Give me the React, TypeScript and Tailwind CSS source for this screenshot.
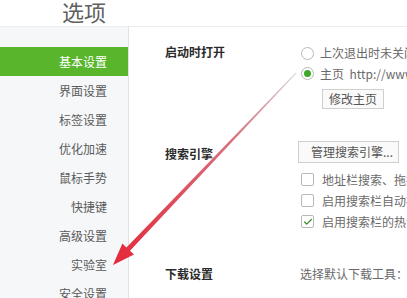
import { Check } from 'lucide-react'

const NAV = ['基本设置', '界面设置', '标签设置', '优化加速', '鼠标手势', '快捷键', '高级设置', '实验室', '安全设置']

function Radio({ on }: { on?: boolean }) {
  return (
    <span className="grid h-[13px] w-[13px] shrink-0 place-items-center rounded-full border border-[#b8b8b8] bg-white">
      {on ? <span className="h-[7px] w-[7px] rounded-full bg-[#3fa82a]" /> : null}
    </span>
  )
}

function Box({ on }: { on?: boolean }) {
  return (
    <span className="grid h-[13px] w-[13px] shrink-0 place-items-center rounded-[2px] border border-[#b8b8b8] bg-white">
      {on ? <Check className="h-[10px] w-[10px] text-[#3a8a2a]" strokeWidth={3} /> : null}
    </span>
  )
}

function Arrow() {
  return (
    <svg className="pointer-events-none absolute left-0 top-0" width="407" height="298" viewBox="0 0 407 298">
      <defs>
        <linearGradient id="ar" x1="296" y1="73" x2="113" y2="265" gradientUnits="userSpaceOnUse">
          <stop offset="0" stopColor="#d6ced1" />
          <stop offset="0.35" stopColor="#d9707c" />
          <stop offset="1" stopColor="#e4283a" />
        </linearGradient>
      </defs>
      <polygon
        points="296.4,73.3 295.6,72.7 126.4,247.4 122.4,243.6 113,265 134,254.6 130,250.8"
        fill="url(#ar)"
      />
    </svg>
  )
}

export default function App() {
  return (
    <div
      className="relative h-[298px] w-[407px] overflow-hidden bg-white text-[12px]"
      style={{ fontFamily: '"Noto Sans CJK SC", "Noto Sans", sans-serif' }}
    >
      <div className="h-[27px] border-b border-[#ececec] pl-[62px] text-[22px] leading-[22px] text-[#606060]">选项</div>
      <div className="flex">
        <aside className="h-[280px] w-[129px] shrink-0 border-r border-[#e2e2e2] bg-[#f6f7f9] pt-[20px]">
          {NAV.map((n, i) => (
            <div
              key={n}
              className={`flex h-[29px] items-center justify-end pr-[21px] ${
                i === 0 ? 'bg-[#58b52c] text-white' : 'text-[#5a5a5a]'
              }`}
            >
              {n}
            </div>
          ))}
        </aside>
        <main className="flex-1 whitespace-nowrap pl-[36px] pt-[16px] text-[#6a6a6a]">
          <div className="flex">
            <div className="w-[135px] font-bold text-[#2a2a2a]">启动时打开</div>
            <div className="flex flex-col">
              <div className="flex h-[20px] items-center gap-[6px] pl-[1px]">
                <Radio />
                <span>上次退出时未关闭的页面</span>
              </div>
              <div className="flex h-[21px] items-center gap-[6px] pl-[1px]">
                <Radio on />
                <span>主页&nbsp;&nbsp;http://www.hao123.com</span>
              </div>
              <button className="ml-[22px] mt-[5px] h-[20px] w-[62px] border border-[#cfcfcf] bg-[#fafafa] text-[12px] text-[#555]">
                修改主页
              </button>
            </div>
          </div>
          <div className="mt-[32px] flex">
            <div className="w-[133px] pt-[4px] font-bold text-[#2a2a2a]">搜索引擎</div>
            <div className="flex flex-col">
              <button className="h-[22px] w-[101px] border border-[#cfcfcf] bg-[#fafafa] text-left pl-[12px] text-[12px] text-[#555]">
                管理搜索引擎...
              </button>
              <div className="mt-[6px] flex h-[21px] items-center gap-[8px] pl-[3px]">
                <Box />
                <span>地址栏搜索、拖拽搜索时在新标签打开</span>
              </div>
              <div className="flex h-[21px] items-center gap-[8px] pl-[3px]">
                <Box />
                <span>启用搜索栏自动补全</span>
              </div>
              <div className="flex h-[21px] items-center gap-[8px] pl-[3px]">
                <Box on />
                <span>启用搜索栏的热词推荐</span>
              </div>
            </div>
          </div>
          <div className="mt-[33px] flex">
            <div className="w-[135px] font-bold text-[#2a2a2a]">下载设置</div>
            <div>选择默认下载工具：</div>
          </div>
        </main>
      </div>
      <Arrow />
    </div>
  )
}
